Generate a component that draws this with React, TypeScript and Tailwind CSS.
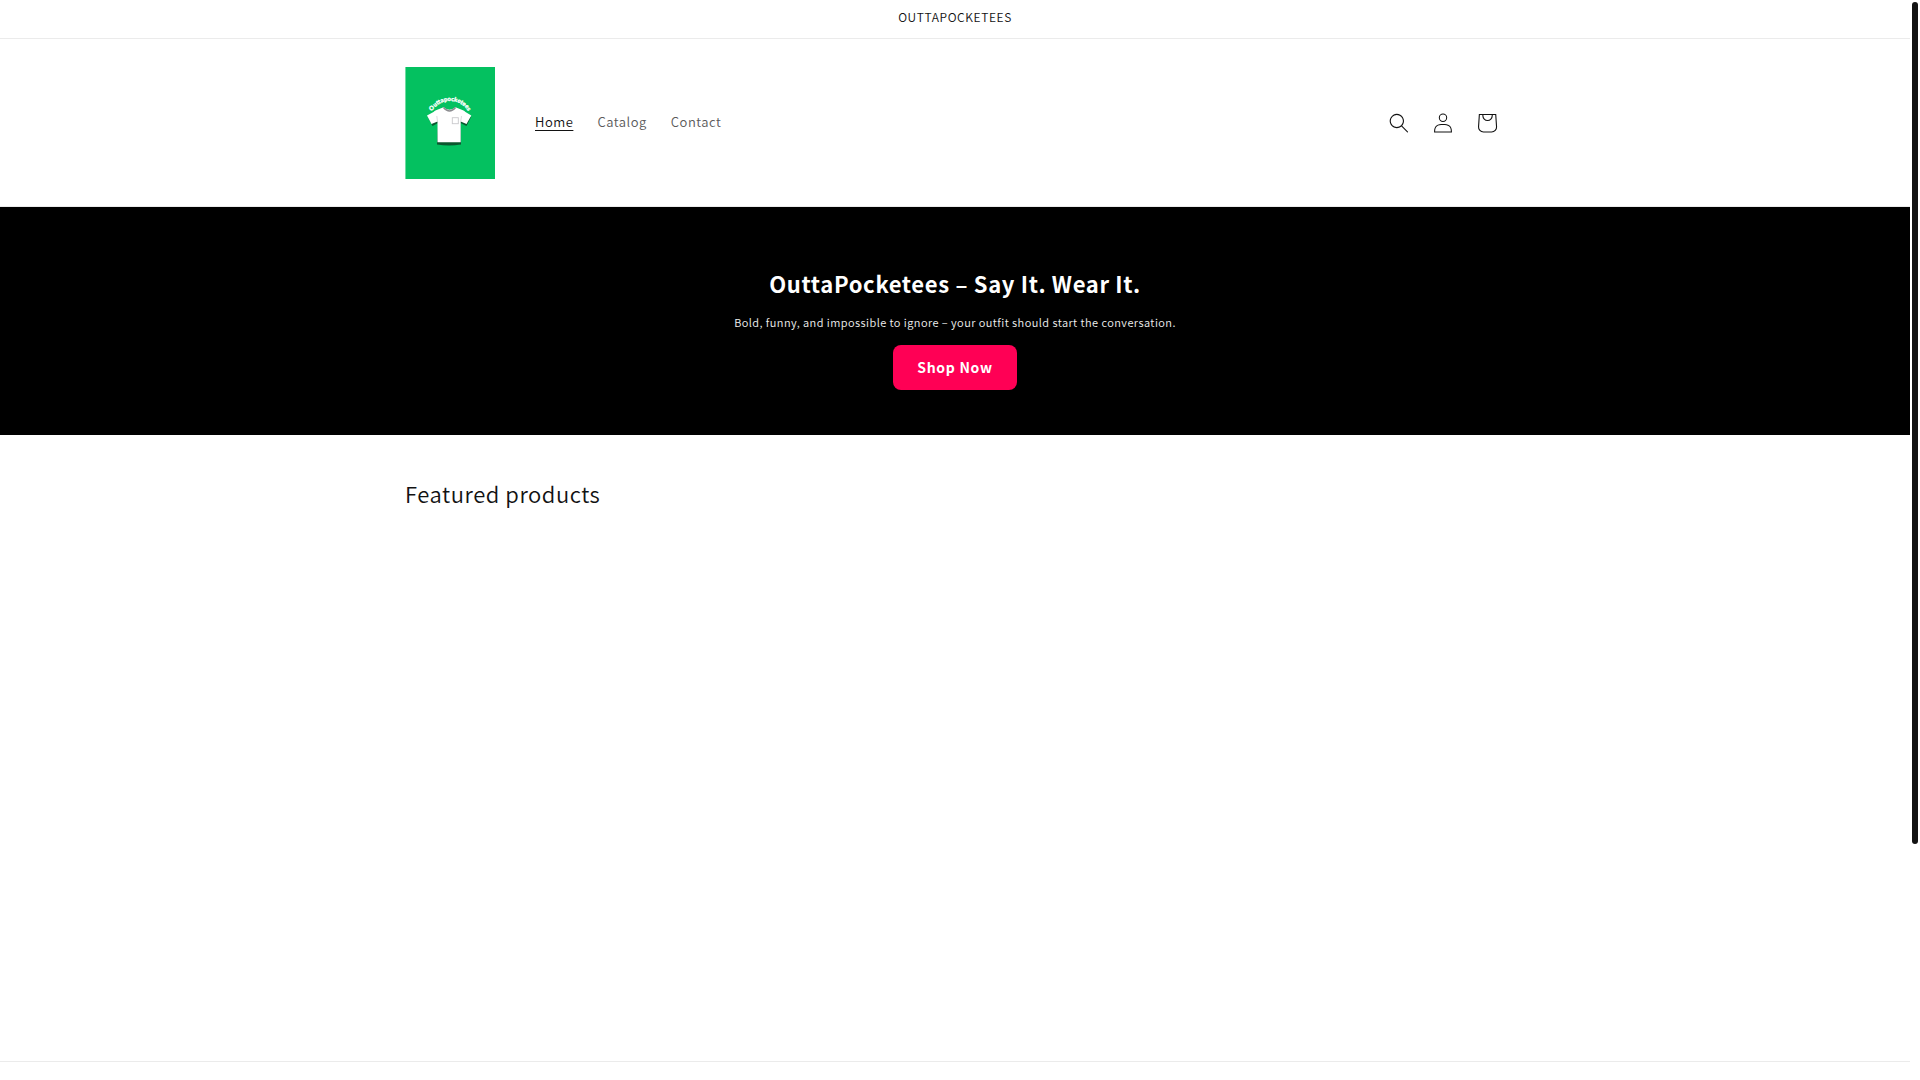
import type { ReactNode } from 'react';

interface NavItem {
  label: string;
  href: string;
  active?: boolean;
}

const navItems: NavItem[] = [
  { label: 'Home', href: '#home', active: true },
  { label: 'Catalog', href: '#catalog' },
  { label: 'Contact', href: '#contact' },
];

function Logo() {
  return (
    <svg viewBox="0 0 90 112" className="h-28 w-[90px]" role="img" aria-label="Outtapocketees">
      <defs>
        <path id="logo-arc" d="M24 55A21 21 0 0 1 66 55" />
        <filter id="logo-shadow" x="-20%" y="-20%" width="140%" height="150%">
          <feGaussianBlur stdDeviation="0.7" />
        </filter>
      </defs>
      <rect width="90" height="112" fill="#04c160" />
      <rect width="1" height="112" fill="#6fdca2" />
      <text
        fill="#fff"
        stroke="#fff"
        strokeWidth="0.3"
        fontSize="6"
        fontWeight="900"
        fontFamily='Lato, "Open Sans", sans-serif'
        textAnchor="middle"
      >
        <textPath href="#logo-arc" startOffset="50%">
          Outtapocketees
        </textPath>
      </text>
      {/* Shadow */}
      <path
        d="M23 50L27.5 59L33 56L32 77.5Q44 79.5 56 77.5L55.5 56L61.5 59L66 50Z"
        fill="#0b3d24"
        opacity="0.8"
        filter="url(#logo-shadow)"
      />
      {/* Shirt */}
      <path
        d="M38.5 40.3L31 43.2Q29.5 44 28.5 45L22 48.5L26.5 57L32.5 54.5V75.3H55.7V54.5L61.5 57L66.3 48.5L60.5 45Q59.5 44 58 43.2L50.5 40.3Q44.5 45 38.5 40.3Z"
        fill="#fff"
      />
      <path d="M38.5 40.5Q44.5 47.5 50.5 40.5" fill="none" stroke="#8c8c90" strokeWidth="1.5" />
      <path d="M32.5 54.5L31.8 49M55.7 54.5L56.5 49" stroke="#c4c4c8" strokeWidth="0.6" />
      <rect x="47.3" y="50.7" width="6" height="6" fill="#fff" stroke="#c9c9cc" strokeWidth="0.9" />
    </svg>
  );
}

function IconButton({ label, children }: { label: string; children: ReactNode }) {
  return (
    <button type="button" aria-label={label} className="flex size-11 items-center justify-center">
      {children}
    </button>
  );
}

function Header() {
  return (
    <header className="border-b border-[#ebebeb]">
      <div className="mx-auto flex max-w-[1200px] items-center px-[50px] pt-7 pb-[27px]">
        <a href="#home">
          <Logo />
        </a>

        <nav className="ml-7 flex pb-[2px]">
          {navItems.map((item) => (
            <a
              key={item.label}
              href={item.href}
              className={`px-3 text-[13px] leading-5 tracking-[0.04em] ${
                item.active
                  ? 'text-[#121212] underline underline-offset-3'
                  : 'text-[#5a5a5a]'
              }`}
            >
              {item.label}
            </a>
          ))}
        </nav>

        <div className="-mr-1 ml-auto flex">
          <IconButton label="Search">
            <svg viewBox="0 0 18 19" className="size-5" fill="currentColor">
              <path
                fillRule="evenodd"
                d="M11.03 11.68A5.784 5.784 0 112.85 3.5a5.784 5.784 0 018.18 8.18zm.26 1.12a6.78 6.78 0 11.72-.7l5.4 5.4a.5.5 0 11-.71.7l-5.41-5.4z"
              />
            </svg>
          </IconButton>
          <IconButton label="Log in">
            <svg viewBox="0 0 18 19" className="size-5" fill="currentColor">
              <path
                fillRule="evenodd"
                d="M6 4.5a3 3 0 116 0 3 3 0 01-6 0zm3-4a4 4 0 100 8 4 4 0 000-8zm5.58 12.15c1.12.82 1.83 2.24 1.91 4.85H1.51c.08-2.6.79-4.03 1.9-4.85C4.66 11.75 6.5 11.5 9 11.5s4.35.26 5.58 1.15zM9 10.5c-2.5 0-4.65.24-6.17 1.35C1.27 12.98.5 14.93.5 18v.5h17V18c0-3.07-.77-5.02-2.33-6.15-1.52-1.1-3.67-1.35-6.17-1.35z"
              />
            </svg>
          </IconButton>
          <IconButton label="Cart">
            <svg viewBox="0 0 40 40" className="size-11" fill="currentColor">
              <path
                fillRule="evenodd"
                d="M15.75 11.8h-3.16l-.77 11.6a5 5 0 0 0 4.99 5.34h7.38a5 5 0 0 0 4.99-5.33l-.78-11.61zm0 1h-2.22l-.71 10.67a4 4 0 0 0 3.99 4.27h7.38a4 4 0 0 0 4-4.27l-.72-10.67h-2.22v.63a4.75 4.75 0 1 1-9.5 0zm8.5 0h-7.5v.63a3.75 3.75 0 1 0 7.5 0z"
              />
            </svg>
          </IconButton>
        </div>
      </div>
    </header>
  );
}

function Hero() {
  return (
    <section className="flex flex-col items-center bg-black px-5 pt-[60px] pb-[45px] text-center text-white">
      <h1 className="text-[22px] leading-8 font-bold tracking-[0.03em]">
        OuttaPocketees – Say It. Wear It.
      </h1>
      <p className="mt-[13px] text-[11px] leading-5 tracking-[0.04em] text-[#f0f0f0]">
        Bold, funny, and impossible to ignore – your outfit should start the conversation.
      </p>
      <a
        href="#catalog"
        className="mt-[13px] rounded-lg bg-[#ff0055] px-6 py-3 text-sm leading-[21px] font-bold tracking-wider"
      >
        Shop Now
      </a>
    </section>
  );
}

export default function App() {
  return (
    <div className='min-h-screen bg-white pr-[10px] font-["Noto_Sans_CJK_JP","Noto_Sans",sans-serif] font-[350] text-[#121212]'>
      <div className="flex min-h-screen flex-col">
        <p className="border-b border-[#ebebeb] pt-[6px] pb-[10px] text-center text-xs leading-[22px] tracking-wider">
          OUTTAPOCKETEES
        </p>
        <Header />
        <main className="flex flex-1 flex-col">
          <Hero />
          <section className="mx-auto w-full max-w-[1200px] flex-1 px-[50px] pt-[42px]">
            <h2 className="text-[22px] leading-8 tracking-wide">Featured products</h2>
          </section>
        </main>
        <footer className="h-[19px] border-t border-[#ebebeb]" />
      </div>

      {/* Scroll thumb */}
      <div className="fixed top-[2px] right-[2px] h-[78%] w-[6px] rounded-full bg-[#121212]" />
    </div>
  );
}
